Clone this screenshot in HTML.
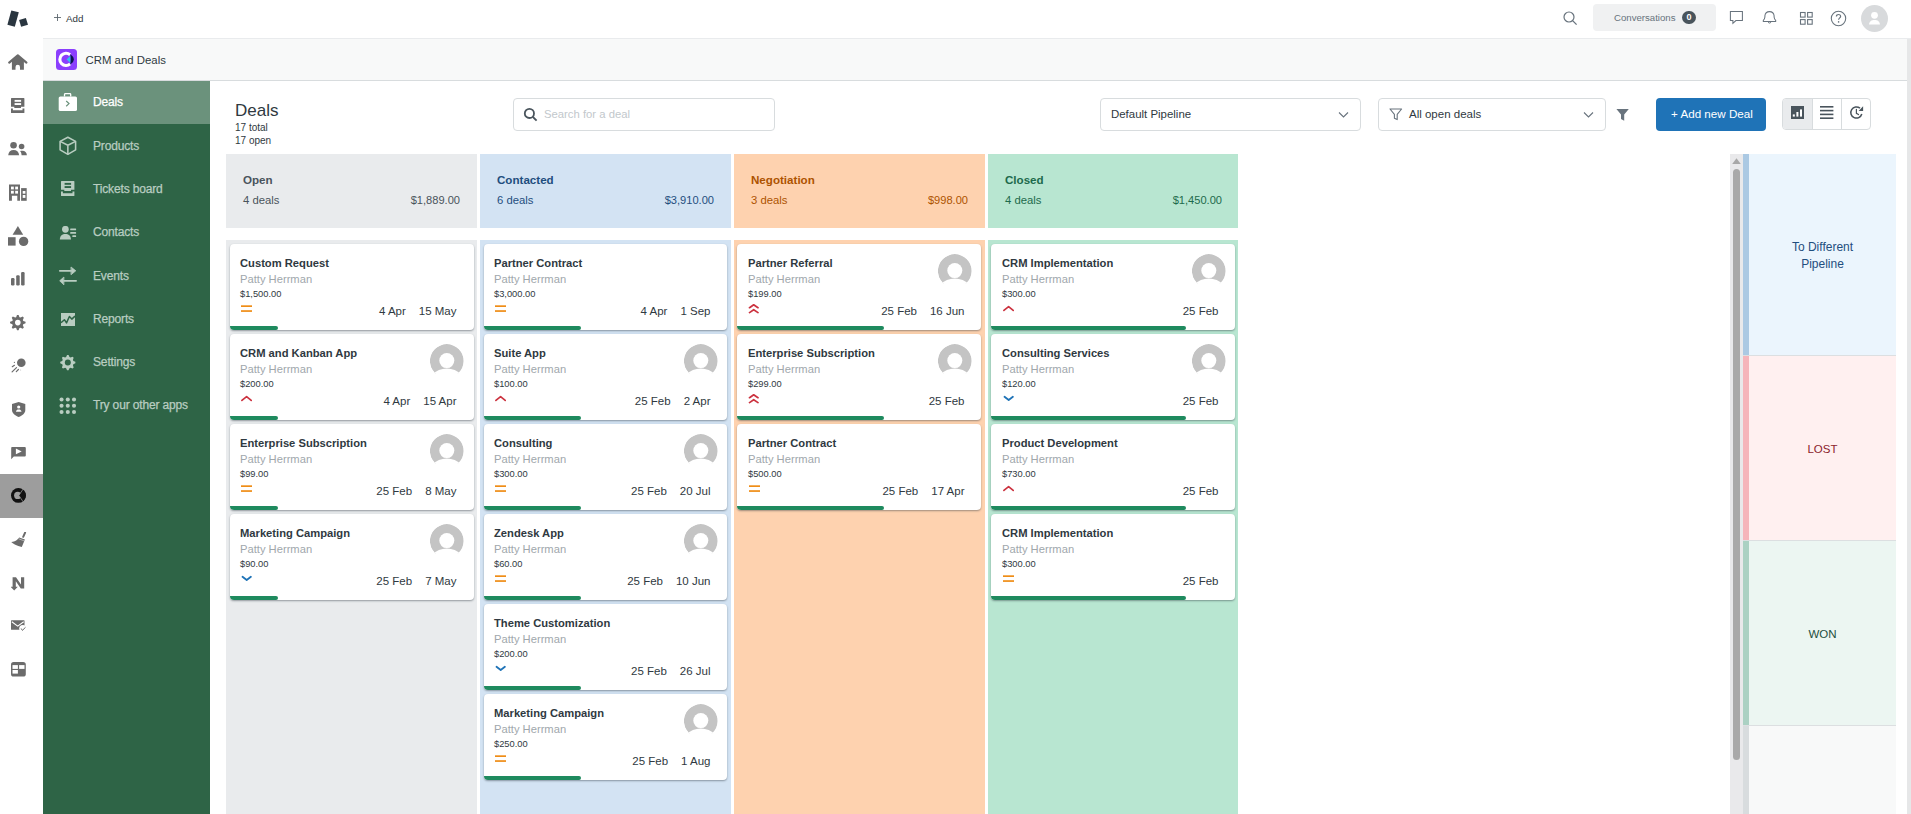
<!DOCTYPE html>
<html><head><meta charset="utf-8"><title>CRM and Deals</title>
<style>
*{box-sizing:border-box;margin:0;padding:0}
html,body{width:1911px;height:814px;overflow:hidden;background:#fff;font-family:"Liberation Sans", sans-serif;color:#2f3941}
.a{position:absolute}
svg.a{display:block}
.t{position:absolute;white-space:nowrap;line-height:1}
.card{position:absolute;width:244px;height:86px;background:#fff;border-radius:4px;box-shadow:0 1px 2px rgba(40,50,60,.45);overflow:hidden}
.card svg{display:block}
.card .ti{position:absolute;left:10px;top:14px;font-size:11.2px;font-weight:700;color:#2f3941;white-space:nowrap;line-height:1}
.card .nm{position:absolute;left:10px;top:30px;font-size:11.2px;color:#a0a7ac;white-space:nowrap;line-height:1}
.card .pr{position:absolute;left:10px;top:45.5px;font-size:9.3px;color:#2f3941;white-space:nowrap;line-height:1}
.card .pi{position:absolute;left:10px;top:61px;line-height:0}
.card .dt{position:absolute;right:17px;top:62px;font-size:11.5px;color:#2f3941;white-space:nowrap;line-height:1}
.card .dt span{margin-left:13px}
.card .av{position:absolute;left:200px;top:10px;width:34px;height:34px}
.card .bar{position:absolute;left:0;top:82px;height:4px;background:#1e8a5e;border-radius:0 3px 3px 3px}
</style></head><body>

<svg class="a" style="left:0;top:0" width="40" height="38" viewBox="0 0 40 38"><polygon points="11.3,10.4 18.8,12.3 14.8,26.7 7.4,24.7" fill="#2a3640"/><polygon points="19.1,19.9 25.9,18 28,24.7 21.1,26.8" fill="#2a3640"/></svg>
<div class="a" style="left:0;top:474px;width:43px;height:44px;background:#9d9d9d"></div>
<svg class="a" style="left:5px;top:50px" width="26" height="26" viewBox="0 0 26 26"><path d="M4.2 12.6 L12.8 5.4 L21.4 12.6" fill="none" stroke="#6b6b6b" stroke-width="2.2" stroke-linecap="round" stroke-linejoin="round"/><path d="M6.9 10.4 L12.8 5.6 L18.9 10.4 V19.8 H15 V16.9 A2.25 2.25 0 0 0 10.5 16.9 V19.8 H6.9 Z" fill="#6b6b6b"/></svg>
<svg class="a" style="left:11px;top:98px" width="14" height="16" viewBox="0 0 14 16"><path d="M0 0.6 Q0 0 0.6 0 H12.8 Q13.4 0 13.4 0.6 V8.7 H10 V9.9 H3.3 V8.7 H0 Z" fill="#6b6b6b"/><rect x="3.6" y="1.9" width="6.5" height="1.9" fill="#fff"/><rect x="3.6" y="5.1" width="6.5" height="1.9" fill="#fff"/><path d="M0 10.5 H1.9 V12.3 H11.5 V10.5 H13.4 V14.5 Q13.4 15.1 12.8 15.1 H0.6 Q0 15.1 0 14.5 Z" fill="#6b6b6b"/></svg>
<svg class="a" style="left:8px;top:142px" width="20" height="14" viewBox="0 0 20 14"><circle cx="5.55" cy="3.3" r="3.3" fill="#6b6b6b"/><path d="M0.2 13.2 C0.5 9.6 2.6 7.9 5.6 7.9 C8.6 7.9 10.8 9.6 11.1 13.2 Z" fill="#6b6b6b"/><circle cx="13.6" cy="4.5" r="2.8" fill="#6b6b6b"/><path d="M12 9 C12.8 8.8 13.6 8.8 14.4 8.8 C17 8.8 18.7 10.4 18.9 13.2 H13.6 C13.5 11.5 13 10 12 9 Z" fill="#6b6b6b"/></svg>
<svg class="a" style="left:9px;top:184px" width="18" height="17" viewBox="0 0 18 17"><path d="M0 0.6 H11 V16.8 H8.3 V11.7 H2.9 V16.8 H0 Z" fill="#6b6b6b"/><rect x="2" y="2.6" width="2.8" height="2.8" fill="#fff"/><rect x="6.2" y="2.6" width="2.8" height="2.8" fill="#fff"/><rect x="2" y="6.8" width="2.8" height="2.8" fill="#fff"/><rect x="6.2" y="6.8" width="2.8" height="2.8" fill="#fff"/><path d="M12.1 4.1 H17.7 V16.8 H12.1 Z" fill="#6b6b6b"/><rect x="13.7" y="7" width="2.7" height="2.7" fill="#fff"/><rect x="13.7" y="11" width="2.7" height="2.9" fill="#fff"/></svg>
<svg class="a" style="left:8px;top:226px" width="21" height="21" viewBox="0 0 21 21"><path d="M9.9 0 L15.2 8.8 H4.6 Z" fill="#6b6b6b"/><rect x="0" y="11.2" width="7.6" height="8.4" fill="#6b6b6b"/><circle cx="15.6" cy="15.4" r="4.7" fill="#6b6b6b"/></svg>
<svg class="a" style="left:11px;top:272px" width="14" height="14" viewBox="0 0 14 14"><rect x="0" y="6" width="3.5" height="7.4" rx="1.2" fill="#6b6b6b"/><rect x="5.2" y="3.3" width="3.5" height="10.1" rx="1.2" fill="#6b6b6b"/><rect x="10.1" y="0" width="3.5" height="13.4" rx="1.2" fill="#6b6b6b"/></svg>
<svg class="a" style="left:10px;top:315px" width="16" height="16" viewBox="0 0 16 16"><path d="M7.04 -0.16 L8.56 -0.16 L9.45 2.15 L10.49 2.57 L12.75 1.57 L13.83 2.65 L12.83 4.91 L13.25 5.95 L15.56 6.84 L15.56 8.36 L13.25 9.25 L12.83 10.29 L13.83 12.55 L12.75 13.63 L10.49 12.63 L9.45 13.05 L8.56 15.36 L7.04 15.36 L6.15 13.05 L5.11 12.63 L2.85 13.63 L1.77 12.55 L2.77 10.29 L2.35 9.25 L0.04 8.36 L0.04 6.84 L2.35 5.95 L2.77 4.91 L1.77 2.65 L2.85 1.57 L5.11 2.57 L6.15 2.15 Z" fill="#6b6b6b"/><circle cx="7.8" cy="7.6" r="2.8" fill="#fff"/></svg>
<svg class="a" style="left:11px;top:358px" width="16" height="16" viewBox="0 0 16 16"><circle cx="10.3" cy="4.7" r="4.3" fill="#6b6b6b"/><circle cx="3.4" cy="4.3" r="0.65" fill="#6b6b6b"/><path d="M1.3 8.7 L3.4 7.3 M1.1 13.9 L5.5 9.6 M5.3 13.6 L7.4 11.5" stroke="#6b6b6b" stroke-width="1.2" stroke-linecap="round"/><circle cx="9.6" cy="12" r="0.5" fill="#bbb"/></svg>
<svg class="a" style="left:12px;top:402px" width="14" height="15" viewBox="0 0 14 15"><path d="M6.7 0 L13.3 2 V8 C13.3 11.4 10.3 13.6 6.7 15 C3.1 13.6 0 11.4 0 8 V2 Z" fill="#6b6b6b"/><circle cx="6.7" cy="5.0" r="1.6" fill="#fff"/><path d="M3.9 9.7 C4.2 8 5.3 7.4 6.7 7.4 C8.1 7.4 9.2 8 9.5 9.7 Z" fill="#fff"/></svg>
<svg class="a" style="left:11px;top:446.5px" width="16" height="13" viewBox="0 0 16 13"><path d="M1 0 H13.8 Q14.8 0 14.8 1 V8.6 Q14.8 9.6 13.8 9.6 H2.8 L0.2 12.2 V1 Q0.2 0 1 0 Z" fill="#6b6b6b"/><path d="M4.9 1.5 L10.7 4.4 L4.9 7.2 Z" fill="#fff"/></svg>
<svg class="a" style="left:11px;top:488px" width="16" height="16" viewBox="0 0 16 16"><circle cx="7.4" cy="7.4" r="7.4" fill="#111"/><circle cx="6.7" cy="7.4" r="3.6" fill="#9d9d9d"/><path d="M7.9 7.4 L11.8 1.4 A7.4 7.4 0 0 1 11.8 13.4 Z" fill="#111"/><path d="M7.9 7.4 L12 1.2 M7.9 7.4 L12 13.6" stroke="#9d9d9d" stroke-width="0.7"/></svg>
<svg class="a" style="left:11px;top:532px" width="16" height="16" viewBox="0 0 16 16"><path d="M14.1 0.6 L12.2 4.8" stroke="#6b6b6b" stroke-width="2" stroke-linecap="round"/><path d="M8.2 5.4 L13.9 7.6 L10.8 14.9 C8.6 14.6 6 13.8 3.8 12.6 C2.4 11.9 1.1 11.1 0.2 10.1 C2.6 9.6 4.9 9 6.4 7.4 Z" fill="#6b6b6b"/><path d="M7.4 6.7 L13.5 9" stroke="#fff" stroke-width="0.6" opacity="0.8"/></svg>
<svg class="a" style="left:11px;top:577px" width="14" height="14" viewBox="0 0 14 14"><path d="M1.6 0.2 H5 L10 7.6 V0.2 H13.2 V11.6 H9.8 L4.8 4.2 V9.8 L6.8 9.8 L3.2 13.6 L-0.4 9.8 L1.6 9.8 Z" fill="#6b6b6b"/></svg>
<svg class="a" style="left:11px;top:620px" width="16" height="13" viewBox="0 0 16 13"><rect x="0" y="0.2" width="13.5" height="9.6" rx="0.6" fill="#6b6b6b"/><circle cx="11.8" cy="8.6" r="3.6" fill="#fff"/><path d="M0.8 1.8 L6.7 6.1 L12.7 1.8" fill="none" stroke="#fff" stroke-width="1.1"/><path d="M10.2 8.5 L11.4 10.4 L14.5 7.3" fill="none" stroke="#6b6b6b" stroke-width="1"/></svg>
<svg class="a" style="left:11px;top:662px" width="15" height="15" viewBox="0 0 15 15"><rect x="0" y="0" width="14.8" height="14.6" rx="2.6" fill="#6b6b6b"/><rect x="1.5" y="3.1" width="5.4" height="3.8" fill="#fff"/><rect x="8.1" y="3.1" width="5.4" height="3.8" fill="#fff"/><rect x="1.5" y="8" width="5.4" height="3.6" fill="#fff"/></svg>
<div class="a" style="left:43px;top:38px;width:1868px;height:1px;background:#e9ebed"></div>
<svg class="a" style="left:54px;top:14px" width="8" height="8" viewBox="0 0 8 8"><path d="M3.5 0 V7 M0 3.5 H7" stroke="#5c666e" stroke-width="0.9"/></svg>
<div class="t" style="left:66px;top:14px;font-size:9.8px;color:#2f3941">Add</div>
<svg class="a" style="left:1563px;top:11px" width="15" height="15" viewBox="0 0 15 15"><circle cx="6" cy="6" r="5" fill="none" stroke="#68737d" stroke-width="1.2"/><path d="M9.6 9.6 L13.6 13.6" stroke="#68737d" stroke-width="1.3"/></svg>
<div class="a" style="left:1593px;top:4px;width:123px;height:27px;background:#f0f1f2;border-radius:4px"></div>
<div class="t" style="left:1614px;top:12.5px;font-size:9.65px;color:#68737d">Conversations</div>
<div class="a" style="left:1682px;top:11px;width:14px;height:13px;border-radius:7px;background:#49545c;color:#fff;font-size:9px;font-weight:700;line-height:13px;text-align:center">0</div>
<svg class="a" style="left:1729px;top:10px" width="16" height="15" viewBox="0 0 16 15"><path d="M1.4 1.5 H13.4 V10.5 H6.9 L3.9 13.3 V10.5 H1.4 Z" fill="none" stroke="#68737d" stroke-width="1.05" stroke-linejoin="miter"/></svg>
<svg class="a" style="left:1762px;top:10px" width="16" height="15" viewBox="0 0 16 15"><path d="M1.3 11.5 V10.3 Q2.7 9.2 2.9 7 V5.8 Q3.3 1.6 7.5 1.6 Q11.7 1.6 12.1 5.8 V7 Q12.3 9.2 13.7 10.3 V11.5 Z" fill="none" stroke="#68737d" stroke-width="1.05" stroke-linejoin="round"/><path d="M6.3 11.8 A1.25 1.25 0 0 0 8.8 11.8" fill="none" stroke="#68737d" stroke-width="1"/></svg>
<svg class="a" style="left:1799px;top:11px" width="16" height="16" viewBox="0 0 16 16"><g fill="none" stroke="#68737d" stroke-width="1.1"><rect x="1.5" y="1.5" width="4.6" height="4.6"/><rect x="8.6" y="1.5" width="4.6" height="4.6"/><rect x="1.5" y="8.6" width="4.6" height="4.6"/><rect x="8.6" y="8.6" width="4.6" height="4.6"/></g></svg>
<svg class="a" style="left:1830px;top:10px" width="17" height="17" viewBox="0 0 17 17"><circle cx="8.5" cy="8.5" r="7.2" fill="none" stroke="#68737d" stroke-width="1.1"/><path d="M6.4 6.6 C6.4 5.2 7.3 4.5 8.5 4.5 C9.7 4.5 10.6 5.3 10.6 6.4 C10.6 7.8 8.6 8 8.6 9.8" fill="none" stroke="#68737d" stroke-width="1.2"/><circle cx="8.6" cy="11.9" r="0.8" fill="#68737d"/></svg>
<svg class="a" style="left:1861px;top:5px" width="27" height="27" viewBox="0 0 27 27"><circle cx="13.5" cy="13.5" r="13.5" fill="#d8dadc"/><circle cx="13.5" cy="10.3" r="3.4" fill="#fff"/><path d="M8 19.6 C8.4 16.2 10.4 15 13.5 15 C16.6 15 18.6 16.2 19 19.6 Z" fill="#fff"/></svg>
<div class="a" style="left:43px;top:39px;width:1864px;height:41px;background:#f8f9f9"></div>
<div class="a" style="left:43px;top:80px;width:1864px;height:1px;background:#d8dcde"></div>
<div class="a" style="left:1907px;top:39px;width:4px;height:775px;background:#e6e7e8"></div>
<svg class="a" style="left:56px;top:49px" width="21" height="21" viewBox="0 0 21 21"><rect width="21" height="21" rx="3.5" fill="#8b3ffd"/><path d="M14.12 5.83 A6.15 6.15 0 1 0 14.12 14.97" fill="none" stroke="#fff" stroke-width="3.1"/><path d="M14.6 6.6 Q12.4 8.9 10.6 10.4 Q12.4 11.9 14.6 14.2 Z" fill="#30c2f0"/><path d="M14.2 4.9 Q21.6 10.4 14.2 15.8 Q15.2 10.4 14.2 4.9 Z" fill="#0b1550"/></svg>
<div class="t" style="left:85.5px;top:55.2px;font-size:11.4px;color:#2f3941">CRM and Deals</div>
<div class="a" style="left:43px;top:81px;width:167px;height:733px;background:#2e6446"></div>
<div class="a" style="left:43px;top:81px;width:167px;height:43px;background:#6b927c"></div>
<div class="t" style="left:93px;top:95.5px;font-size:12px;color:#fff;letter-spacing:-0.15px;-webkit-text-stroke:0.25px #fff">Deals</div>
<div class="t" style="left:93px;top:139.5px;font-size:12px;color:#b9cdc1;letter-spacing:-0.15px;-webkit-text-stroke:0.25px #b9cdc1">Products</div>
<div class="t" style="left:93px;top:182.5px;font-size:12px;color:#b9cdc1;letter-spacing:-0.15px;-webkit-text-stroke:0.25px #b9cdc1">Tickets board</div>
<div class="t" style="left:93px;top:225.5px;font-size:12px;color:#b9cdc1;letter-spacing:-0.15px;-webkit-text-stroke:0.25px #b9cdc1">Contacts</div>
<div class="t" style="left:93px;top:269.5px;font-size:12px;color:#b9cdc1;letter-spacing:-0.15px;-webkit-text-stroke:0.25px #b9cdc1">Events</div>
<div class="t" style="left:93px;top:312.5px;font-size:12px;color:#b9cdc1;letter-spacing:-0.15px;-webkit-text-stroke:0.25px #b9cdc1">Reports</div>
<div class="t" style="left:93px;top:355.5px;font-size:12px;color:#b9cdc1;letter-spacing:-0.15px;-webkit-text-stroke:0.25px #b9cdc1">Settings</div>
<div class="t" style="left:93px;top:399.0px;font-size:12px;color:#b9cdc1;letter-spacing:-0.15px;-webkit-text-stroke:0.25px #b9cdc1">Try our other apps</div>
<svg class="a" style="left:58px;top:93px" width="20" height="19" viewBox="0 0 20 19"><path d="M6.5 3.4 V1.6 Q6.5 0.6 7.5 0.6 H11.7 Q12.7 0.6 12.7 1.6 V3.4" fill="none" stroke="#fff" stroke-width="1.3"/><rect x="0.7" y="3.4" width="18.3" height="14.6" rx="1.6" fill="#fff"/><path d="M8.2 8 L11 10.6 L8.2 13.2" fill="none" stroke="#6b927c" stroke-width="1.2"/></svg>
<svg class="a" style="left:58px;top:136px" width="19" height="20" viewBox="0 0 19 20"><g fill="none" stroke="#b9cdc1" stroke-width="1.55" stroke-linejoin="round"><path d="M9.85 1.3 L17.6 5.4 V13.8 L9.85 18.3 L2.1 13.8 V5.4 Z"/><path d="M2.1 5.4 L9.85 9.3 L17.6 5.4 M9.85 9.3 V18.3"/></g></svg>
<svg class="a" style="left:61px;top:181px" width="14" height="16" viewBox="0 0 14 16"><path d="M0 0.6 Q0 0 0.6 0 H12.8 Q13.4 0 13.4 0.6 V8.7 H10 V9.9 H3.3 V8.7 H0 Z" fill="#b9cdc1"/><rect x="3.6" y="1.9" width="6.5" height="1.9" fill="#2e6446"/><rect x="3.6" y="5.1" width="6.5" height="1.9" fill="#2e6446"/><path d="M0 10.5 H1.9 V12.3 H11.5 V10.5 H13.4 V14.5 Q13.4 15.1 12.8 15.1 H0.6 Q0 15.1 0 14.5 Z" fill="#b9cdc1"/></svg>
<svg class="a" style="left:59px;top:226px" width="18" height="14" viewBox="0 0 18 14"><circle cx="6.4" cy="3.3" r="3.35" fill="#b9cdc1"/><path d="M0.8 13.5 C1 9.6 3.3 8 6.4 8 C9.5 8 11.8 9.6 12 13.5 Z" fill="#b9cdc1"/><rect x="11.2" y="2.6" width="5.9" height="1.6" rx="0.5" fill="#b9cdc1"/><rect x="11.2" y="6.1" width="5.9" height="1.6" rx="0.5" fill="#b9cdc1"/><rect x="13.3" y="9.3" width="3.8" height="1.6" rx="0.5" fill="#b9cdc1"/></svg>
<svg class="a" style="left:58px;top:265px" width="20" height="21" viewBox="0 0 20 21"><g fill="#b9cdc1" stroke="#b9cdc1" stroke-linejoin="round" stroke-linecap="round"><path d="M1.8 5.8 H13.5" stroke-width="1.7" fill="none"/><path d="M13.3 2.2 L17.8 5.8 L13.3 9.5 Z" stroke-width="0.8"/><path d="M6 15.8 H18.1" stroke-width="1.7" fill="none"/><path d="M5.6 12.3 L1.7 15.8 L5.6 19.6 Z" stroke-width="0.8"/></g></svg>
<svg class="a" style="left:61px;top:313px" width="14" height="13" viewBox="0 0 14 13"><path d="M0 0 H14 V13 H0 Z" fill="#b9cdc1"/><path d="M0 9.8 L3.4 6.7 L5.5 9.9 L8.4 3.5 L10.8 6.1 L14 3.1" fill="none" stroke="#2e6446" stroke-width="1.5" stroke-linejoin="round"/></svg>
<svg class="a" style="left:60px;top:355.3px" width="16" height="16" viewBox="0 0 16 16"><path d="M7.06 0.04 L8.54 0.04 L9.48 2.05 L10.53 2.48 L12.62 1.73 L13.67 2.78 L12.92 4.87 L13.35 5.92 L15.36 6.86 L15.36 8.34 L13.35 9.28 L12.92 10.33 L13.67 12.42 L12.62 13.47 L10.53 12.72 L9.48 13.15 L8.54 15.16 L7.06 15.16 L6.12 13.15 L5.07 12.72 L2.98 13.47 L1.93 12.42 L2.68 10.33 L2.25 9.28 L0.24 8.34 L0.24 6.86 L2.25 5.92 L2.68 4.87 L1.93 2.78 L2.98 1.73 L5.07 2.48 L6.12 2.05 Z" fill="#b9cdc1"/><circle cx="7.8" cy="7.6" r="3" fill="#2e6446"/></svg>
<svg class="a" style="left:59px;top:397px" width="18" height="18" viewBox="0 0 18 18"><circle cx="2.55" cy="2.50" r="2.05" fill="#b9cdc1"/><circle cx="8.78" cy="2.50" r="2.05" fill="#b9cdc1"/><circle cx="15.01" cy="2.50" r="2.05" fill="#b9cdc1"/><circle cx="2.55" cy="8.73" r="2.05" fill="#b9cdc1"/><circle cx="8.78" cy="8.73" r="2.05" fill="#b9cdc1"/><circle cx="15.01" cy="8.73" r="2.05" fill="#b9cdc1"/><circle cx="2.55" cy="14.96" r="2.05" fill="#b9cdc1"/><circle cx="8.78" cy="14.96" r="2.05" fill="#b9cdc1"/><circle cx="15.01" cy="14.96" r="2.05" fill="#b9cdc1"/></svg>
<div class="t" style="left:235px;top:102.2px;font-size:17px;color:#2f3941">Deals</div>
<div class="t" style="left:235px;top:123px;font-size:10px;color:#2f3941">17 total</div>
<div class="t" style="left:235px;top:135.5px;font-size:10px;color:#2f3941">17 open</div>
<div class="a" style="left:513px;top:98px;width:262px;height:33px;border:1px solid #d8dcde;border-radius:4px"></div>
<svg class="a" style="left:523px;top:107px" width="16" height="16" viewBox="0 0 16 16"><circle cx="6.4" cy="6.4" r="4.6" fill="none" stroke="#49545c" stroke-width="1.8"/><path d="M9.8 9.8 L13.6 13.6" stroke="#49545c" stroke-width="1.9"/></svg>
<div class="t" style="left:544px;top:109.3px;font-size:11.3px;color:#c2c8cc">Search for a deal</div>
<div class="a" style="left:1100px;top:98px;width:261px;height:33px;border:1px solid #d8dcde;border-radius:4px"></div>
<div class="t" style="left:1111px;top:109px;font-size:11.45px;color:#2f3941">Default Pipeline</div>
<svg class="a" style="left:1338px;top:111px" width="11" height="8" viewBox="0 0 11 8"><path d="M1 1.5 L5.5 6 L10 1.5" fill="none" stroke="#68737d" stroke-width="1.1"/></svg>
<div class="a" style="left:1378px;top:98px;width:228px;height:33px;border:1px solid #d8dcde;border-radius:4px"></div>
<svg class="a" style="left:1389px;top:108px" width="14" height="13" viewBox="0 0 14 13"><path d="M1 1 H12.6 L8.2 6.4 V11.6 L5.4 10.2 V6.4 Z" fill="none" stroke="#68737d" stroke-width="1.1" stroke-linejoin="round"/></svg>
<div class="t" style="left:1409px;top:109px;font-size:11.5px;color:#2f3941">All open deals</div>
<svg class="a" style="left:1583px;top:111px" width="11" height="8" viewBox="0 0 11 8"><path d="M1 1.5 L5.5 6 L10 1.5" fill="none" stroke="#68737d" stroke-width="1.1"/></svg>
<svg class="a" style="left:1616px;top:108px" width="14" height="14" viewBox="0 0 14 14"><path d="M0.4 1 H12.8 L8.2 6.6 V12.8 L5 11 V6.6 Z" fill="#68737d"/></svg>
<div class="a" style="left:1656px;top:98px;width:110px;height:33px;background:#1f73b7;border-radius:4px"></div>
<div class="t" style="left:1671px;top:107.5px;font-size:11.65px;color:#fff">+ Add new Deal</div>
<div class="a" style="left:1782px;top:98px;width:89px;height:32px;border:1px solid #d8dcde;border-radius:4px;overflow:hidden"><div style="position:absolute;left:0;top:0;width:29px;height:30px;background:#e9ebed"></div><div style="position:absolute;left:29px;top:0;width:1px;height:30px;background:#d8dcde"></div><div style="position:absolute;left:58px;top:0;width:1px;height:30px;background:#d8dcde"></div></div>
<svg class="a" style="left:1791px;top:106px" width="13" height="13" viewBox="0 0 13 13"><rect width="13" height="13" fill="#49545c"/><rect x="1.8" y="8.4" width="2" height="2.2" fill="#fff"/><rect x="5.4" y="6" width="2" height="4.6" fill="#fff"/><rect x="9" y="3.4" width="2" height="7.2" fill="#fff"/></svg>
<svg class="a" style="left:1820px;top:106px" width="14" height="14" viewBox="0 0 14 14"><g fill="#49545c"><rect x="0" y="0" width="13.4" height="1.6"/><rect x="0" y="3.8" width="13.4" height="1.6"/><rect x="0" y="7.6" width="13.4" height="1.6"/><rect x="0" y="11.4" width="13.4" height="1.6"/></g></svg>
<svg class="a" style="left:1849px;top:105px" width="15" height="15" viewBox="0 0 15 15"><path d="M12.8 9 A5.6 5.6 0 1 1 11 3.2" fill="none" stroke="#49545c" stroke-width="1.5"/><path d="M14.1 1.3 L14.1 5.9 L9.6 5.9 Z" fill="#49545c"/><path d="M7.4 4.3 V8.3 L9.5 9.6" fill="none" stroke="#49545c" stroke-width="1.2" stroke-linecap="round"/></svg>
<div class="a" style="left:226px;top:154px;width:251px;height:74px;background:#e9ebed"></div>
<div class="a" style="left:226px;top:240px;width:251px;height:574px;background:#e9ebed"></div>
<div class="t" style="left:243px;top:174px;font-size:11.6px;font-weight:700;color:#49545c">Open</div>
<div class="t" style="left:243px;top:195px;font-size:11.3px;color:#49545c">4 deals</div>
<div class="t" style="left:243px;top:195px;width:217px;text-align:right;font-size:11.1px;color:#49545c">$1,889.00</div>
<div class="card" style="left:230px;top:244px"><div class="ti" style="left:10px">Custom Request</div><div class="nm" style="left:10px">Patty Herrman</div><div class="pr" style="left:10px">$1,500.00</div><div class="pi" style="left:10px"><svg width="13" height="8" viewBox="0 0 13 8"><rect x="1" y="0.3" width="11" height="1.7" fill="#ef8d17"/><rect x="1" y="5.2" width="11" height="1.7" fill="#ef8d17"/></svg></div><div class="dt" style="right:17.5px">4 Apr<span>15 May</span></div><div class="bar" style="width:48px"></div></div>
<div class="card" style="left:230px;top:334px"><div class="ti" style="left:10px">CRM and Kanban App</div><div class="nm" style="left:10px">Patty Herrman</div><div class="pr" style="left:10px">$200.00</div><div class="pi" style="left:10px"><svg width="13" height="8" viewBox="0 0 13 8"><path d="M1.9 5.4 L6.6 1.6 L11.2 5.4" fill="none" stroke="#cc3340" stroke-width="1.7" stroke-linecap="round" stroke-linejoin="round"/></svg></div><div class="av" style="left:200px"><svg width="34" height="34" viewBox="0 0 34 34"><defs><clipPath id="ac"><circle cx="16.8" cy="17" r="16.9"/></clipPath></defs><g clip-path="url(#ac)"><circle cx="16.8" cy="17" r="16.9" fill="#c4c4c4"/><circle cx="16.8" cy="16.6" r="7.5" fill="#fff"/><circle cx="16.8" cy="45" r="20.6" fill="#fff"/></g><rect x="0" y="30" width="34" height="4" fill="#fff"/></svg></div><div class="dt" style="right:17.5px">4 Apr<span>15 Apr</span></div><div class="bar" style="width:48px"></div></div>
<div class="card" style="left:230px;top:424px"><div class="ti" style="left:10px">Enterprise Subscription</div><div class="nm" style="left:10px">Patty Herrman</div><div class="pr" style="left:10px">$99.00</div><div class="pi" style="left:10px"><svg width="13" height="8" viewBox="0 0 13 8"><rect x="1" y="0.3" width="11" height="1.7" fill="#ef8d17"/><rect x="1" y="5.2" width="11" height="1.7" fill="#ef8d17"/></svg></div><div class="av" style="left:200px"><svg width="34" height="34" viewBox="0 0 34 34"><defs><clipPath id="ac"><circle cx="16.8" cy="17" r="16.9"/></clipPath></defs><g clip-path="url(#ac)"><circle cx="16.8" cy="17" r="16.9" fill="#c4c4c4"/><circle cx="16.8" cy="16.6" r="7.5" fill="#fff"/><circle cx="16.8" cy="45" r="20.6" fill="#fff"/></g><rect x="0" y="30" width="34" height="4" fill="#fff"/></svg></div><div class="dt" style="right:17.5px">25 Feb<span>8 May</span></div><div class="bar" style="width:48px"></div></div>
<div class="card" style="left:230px;top:514px"><div class="ti" style="left:10px">Marketing Campaign</div><div class="nm" style="left:10px">Patty Herrman</div><div class="pr" style="left:10px">$90.00</div><div class="pi" style="left:10px"><svg width="13" height="8" viewBox="0 0 13 8"><path d="M2.5 1.7 L6.7 5 L10.9 1.7" fill="none" stroke="#1f73b7" stroke-width="1.8" stroke-linecap="round" stroke-linejoin="round"/></svg></div><div class="av" style="left:200px"><svg width="34" height="34" viewBox="0 0 34 34"><defs><clipPath id="ac"><circle cx="16.8" cy="17" r="16.9"/></clipPath></defs><g clip-path="url(#ac)"><circle cx="16.8" cy="17" r="16.9" fill="#c4c4c4"/><circle cx="16.8" cy="16.6" r="7.5" fill="#fff"/><circle cx="16.8" cy="45" r="20.6" fill="#fff"/></g><rect x="0" y="30" width="34" height="4" fill="#fff"/></svg></div><div class="dt" style="right:17.5px">25 Feb<span>7 May</span></div><div class="bar" style="width:48px"></div></div>
<div class="a" style="left:480px;top:154px;width:251px;height:74px;background:#d3e3f3"></div>
<div class="a" style="left:480px;top:240px;width:251px;height:574px;background:#d3e3f3"></div>
<div class="t" style="left:497px;top:174px;font-size:11.6px;font-weight:700;color:#1f4e7e">Contacted</div>
<div class="t" style="left:497px;top:195px;font-size:11.3px;color:#1f4e7e">6 deals</div>
<div class="t" style="left:497px;top:195px;width:217px;text-align:right;font-size:11.1px;color:#1f4e7e">$3,910.00</div>
<div class="card" style="left:484px;top:244px;width:243.2px"><div class="ti" style="left:10px">Partner Contract</div><div class="nm" style="left:10px">Patty Herrman</div><div class="pr" style="left:10px">$3,000.00</div><div class="pi" style="left:10px"><svg width="13" height="8" viewBox="0 0 13 8"><rect x="1" y="0.3" width="11" height="1.7" fill="#ef8d17"/><rect x="1" y="5.2" width="11" height="1.7" fill="#ef8d17"/></svg></div><div class="dt" style="right:16.7px">4 Apr<span>1 Sep</span></div><div class="bar" style="width:97px"></div></div>
<div class="card" style="left:484px;top:334px;width:243.2px"><div class="ti" style="left:10px">Suite App</div><div class="nm" style="left:10px">Patty Herrman</div><div class="pr" style="left:10px">$100.00</div><div class="pi" style="left:10px"><svg width="13" height="8" viewBox="0 0 13 8"><path d="M1.9 5.4 L6.6 1.6 L11.2 5.4" fill="none" stroke="#cc3340" stroke-width="1.7" stroke-linecap="round" stroke-linejoin="round"/></svg></div><div class="av" style="left:200px"><svg width="34" height="34" viewBox="0 0 34 34"><defs><clipPath id="ac"><circle cx="16.8" cy="17" r="16.9"/></clipPath></defs><g clip-path="url(#ac)"><circle cx="16.8" cy="17" r="16.9" fill="#c4c4c4"/><circle cx="16.8" cy="16.6" r="7.5" fill="#fff"/><circle cx="16.8" cy="45" r="20.6" fill="#fff"/></g><rect x="0" y="30" width="34" height="4" fill="#fff"/></svg></div><div class="dt" style="right:16.7px">25 Feb<span>2 Apr</span></div><div class="bar" style="width:97px"></div></div>
<div class="card" style="left:484px;top:424px;width:243.2px"><div class="ti" style="left:10px">Consulting</div><div class="nm" style="left:10px">Patty Herrman</div><div class="pr" style="left:10px">$300.00</div><div class="pi" style="left:10px"><svg width="13" height="8" viewBox="0 0 13 8"><rect x="1" y="0.3" width="11" height="1.7" fill="#ef8d17"/><rect x="1" y="5.2" width="11" height="1.7" fill="#ef8d17"/></svg></div><div class="av" style="left:200px"><svg width="34" height="34" viewBox="0 0 34 34"><defs><clipPath id="ac"><circle cx="16.8" cy="17" r="16.9"/></clipPath></defs><g clip-path="url(#ac)"><circle cx="16.8" cy="17" r="16.9" fill="#c4c4c4"/><circle cx="16.8" cy="16.6" r="7.5" fill="#fff"/><circle cx="16.8" cy="45" r="20.6" fill="#fff"/></g><rect x="0" y="30" width="34" height="4" fill="#fff"/></svg></div><div class="dt" style="right:16.7px">25 Feb<span>20 Jul</span></div><div class="bar" style="width:97px"></div></div>
<div class="card" style="left:484px;top:514px;width:243.2px"><div class="ti" style="left:10px">Zendesk App</div><div class="nm" style="left:10px">Patty Herrman</div><div class="pr" style="left:10px">$60.00</div><div class="pi" style="left:10px"><svg width="13" height="8" viewBox="0 0 13 8"><rect x="1" y="0.3" width="11" height="1.7" fill="#ef8d17"/><rect x="1" y="5.2" width="11" height="1.7" fill="#ef8d17"/></svg></div><div class="av" style="left:200px"><svg width="34" height="34" viewBox="0 0 34 34"><defs><clipPath id="ac"><circle cx="16.8" cy="17" r="16.9"/></clipPath></defs><g clip-path="url(#ac)"><circle cx="16.8" cy="17" r="16.9" fill="#c4c4c4"/><circle cx="16.8" cy="16.6" r="7.5" fill="#fff"/><circle cx="16.8" cy="45" r="20.6" fill="#fff"/></g><rect x="0" y="30" width="34" height="4" fill="#fff"/></svg></div><div class="dt" style="right:16.7px">25 Feb<span>10 Jun</span></div><div class="bar" style="width:97px"></div></div>
<div class="card" style="left:484px;top:604px;width:243.2px"><div class="ti" style="left:10px">Theme Customization</div><div class="nm" style="left:10px">Patty Herrman</div><div class="pr" style="left:10px">$200.00</div><div class="pi" style="left:10px"><svg width="13" height="8" viewBox="0 0 13 8"><path d="M2.5 1.7 L6.7 5 L10.9 1.7" fill="none" stroke="#1f73b7" stroke-width="1.8" stroke-linecap="round" stroke-linejoin="round"/></svg></div><div class="dt" style="right:16.7px">25 Feb<span>26 Jul</span></div><div class="bar" style="width:97px"></div></div>
<div class="card" style="left:484px;top:694px;width:243.2px"><div class="ti" style="left:10px">Marketing Campaign</div><div class="nm" style="left:10px">Patty Herrman</div><div class="pr" style="left:10px">$250.00</div><div class="pi" style="left:10px"><svg width="13" height="8" viewBox="0 0 13 8"><rect x="1" y="0.3" width="11" height="1.7" fill="#ef8d17"/><rect x="1" y="5.2" width="11" height="1.7" fill="#ef8d17"/></svg></div><div class="av" style="left:200px"><svg width="34" height="34" viewBox="0 0 34 34"><defs><clipPath id="ac"><circle cx="16.8" cy="17" r="16.9"/></clipPath></defs><g clip-path="url(#ac)"><circle cx="16.8" cy="17" r="16.9" fill="#c4c4c4"/><circle cx="16.8" cy="16.6" r="7.5" fill="#fff"/><circle cx="16.8" cy="45" r="20.6" fill="#fff"/></g><rect x="0" y="30" width="34" height="4" fill="#fff"/></svg></div><div class="dt" style="right:16.7px">25 Feb<span>1 Aug</span></div><div class="bar" style="width:97px"></div></div>
<div class="a" style="left:734px;top:154px;width:251px;height:74px;background:#fed2af"></div>
<div class="a" style="left:734px;top:240px;width:251px;height:574px;background:#fed2af"></div>
<div class="t" style="left:751px;top:174px;font-size:11.6px;font-weight:700;color:#ad5300">Negotiation</div>
<div class="t" style="left:751px;top:195px;font-size:11.3px;color:#ad5300">3 deals</div>
<div class="t" style="left:751px;top:195px;width:217px;text-align:right;font-size:11.1px;color:#ad5300">$998.00</div>
<div class="card" style="left:737px;top:244px"><div class="ti" style="left:11px">Partner Referral</div><div class="nm" style="left:11px">Patty Herrman</div><div class="pr" style="left:11px">$199.00</div><div class="pi" style="left:11px"><svg width="13" height="12" viewBox="0 0 13 12" style="margin-top:-1px"><path d="M1.5 3.7 L5.7 0.8 L10 3.7 M1.5 8.6 L5.7 5.7 L10 8.6" fill="none" stroke="#cc3340" stroke-width="1.7" stroke-linecap="round" stroke-linejoin="round"/></svg></div><div class="av" style="left:201px"><svg width="34" height="34" viewBox="0 0 34 34"><defs><clipPath id="ac"><circle cx="16.8" cy="17" r="16.9"/></clipPath></defs><g clip-path="url(#ac)"><circle cx="16.8" cy="17" r="16.9" fill="#c4c4c4"/><circle cx="16.8" cy="16.6" r="7.5" fill="#fff"/><circle cx="16.8" cy="45" r="20.6" fill="#fff"/></g><rect x="0" y="30" width="34" height="4" fill="#fff"/></svg></div><div class="dt" style="right:16.5px">25 Feb<span>16 Jun</span></div><div class="bar" style="width:147px"></div></div>
<div class="card" style="left:737px;top:334px"><div class="ti" style="left:11px">Enterprise Subscription</div><div class="nm" style="left:11px">Patty Herrman</div><div class="pr" style="left:11px">$299.00</div><div class="pi" style="left:11px"><svg width="13" height="12" viewBox="0 0 13 12" style="margin-top:-1px"><path d="M1.5 3.7 L5.7 0.8 L10 3.7 M1.5 8.6 L5.7 5.7 L10 8.6" fill="none" stroke="#cc3340" stroke-width="1.7" stroke-linecap="round" stroke-linejoin="round"/></svg></div><div class="av" style="left:201px"><svg width="34" height="34" viewBox="0 0 34 34"><defs><clipPath id="ac"><circle cx="16.8" cy="17" r="16.9"/></clipPath></defs><g clip-path="url(#ac)"><circle cx="16.8" cy="17" r="16.9" fill="#c4c4c4"/><circle cx="16.8" cy="16.6" r="7.5" fill="#fff"/><circle cx="16.8" cy="45" r="20.6" fill="#fff"/></g><rect x="0" y="30" width="34" height="4" fill="#fff"/></svg></div><div class="dt" style="right:16.5px">25 Feb</div><div class="bar" style="width:147px"></div></div>
<div class="card" style="left:737px;top:424px"><div class="ti" style="left:11px">Partner Contract</div><div class="nm" style="left:11px">Patty Herrman</div><div class="pr" style="left:11px">$500.00</div><div class="pi" style="left:11px"><svg width="13" height="8" viewBox="0 0 13 8"><rect x="1" y="0.3" width="11" height="1.7" fill="#ef8d17"/><rect x="1" y="5.2" width="11" height="1.7" fill="#ef8d17"/></svg></div><div class="dt" style="right:16.5px">25 Feb<span>17 Apr</span></div><div class="bar" style="width:147px"></div></div>
<div class="a" style="left:988px;top:154px;width:250px;height:74px;background:#b8e6d1"></div>
<div class="a" style="left:988px;top:240px;width:250px;height:574px;background:#b8e6d1"></div>
<div class="t" style="left:1005px;top:174px;font-size:11.6px;font-weight:700;color:#1d6a4c">Closed</div>
<div class="t" style="left:1005px;top:195px;font-size:11.3px;color:#1d6a4c">4 deals</div>
<div class="t" style="left:1005px;top:195px;width:217px;text-align:right;font-size:11.1px;color:#1d6a4c">$1,450.00</div>
<div class="card" style="left:991px;top:244px"><div class="ti" style="left:11px">CRM Implementation</div><div class="nm" style="left:11px">Patty Herrman</div><div class="pr" style="left:11px">$300.00</div><div class="pi" style="left:11px"><svg width="13" height="8" viewBox="0 0 13 8"><path d="M1.9 5.4 L6.6 1.6 L11.2 5.4" fill="none" stroke="#cc3340" stroke-width="1.7" stroke-linecap="round" stroke-linejoin="round"/></svg></div><div class="av" style="left:201px"><svg width="34" height="34" viewBox="0 0 34 34"><defs><clipPath id="ac"><circle cx="16.8" cy="17" r="16.9"/></clipPath></defs><g clip-path="url(#ac)"><circle cx="16.8" cy="17" r="16.9" fill="#c4c4c4"/><circle cx="16.8" cy="16.6" r="7.5" fill="#fff"/><circle cx="16.8" cy="45" r="20.6" fill="#fff"/></g><rect x="0" y="30" width="34" height="4" fill="#fff"/></svg></div><div class="dt" style="right:16.5px">25 Feb</div><div class="bar" style="width:195px"></div></div>
<div class="card" style="left:991px;top:334px"><div class="ti" style="left:11px">Consulting Services</div><div class="nm" style="left:11px">Patty Herrman</div><div class="pr" style="left:11px">$120.00</div><div class="pi" style="left:11px"><svg width="13" height="8" viewBox="0 0 13 8"><path d="M2.5 1.7 L6.7 5 L10.9 1.7" fill="none" stroke="#1f73b7" stroke-width="1.8" stroke-linecap="round" stroke-linejoin="round"/></svg></div><div class="av" style="left:201px"><svg width="34" height="34" viewBox="0 0 34 34"><defs><clipPath id="ac"><circle cx="16.8" cy="17" r="16.9"/></clipPath></defs><g clip-path="url(#ac)"><circle cx="16.8" cy="17" r="16.9" fill="#c4c4c4"/><circle cx="16.8" cy="16.6" r="7.5" fill="#fff"/><circle cx="16.8" cy="45" r="20.6" fill="#fff"/></g><rect x="0" y="30" width="34" height="4" fill="#fff"/></svg></div><div class="dt" style="right:16.5px">25 Feb</div><div class="bar" style="width:195px"></div></div>
<div class="card" style="left:991px;top:424px"><div class="ti" style="left:11px">Product Development</div><div class="nm" style="left:11px">Patty Herrman</div><div class="pr" style="left:11px">$730.00</div><div class="pi" style="left:11px"><svg width="13" height="8" viewBox="0 0 13 8"><path d="M1.9 5.4 L6.6 1.6 L11.2 5.4" fill="none" stroke="#cc3340" stroke-width="1.7" stroke-linecap="round" stroke-linejoin="round"/></svg></div><div class="dt" style="right:16.5px">25 Feb</div><div class="bar" style="width:195px"></div></div>
<div class="card" style="left:991px;top:514px"><div class="ti" style="left:11px">CRM Implementation</div><div class="nm" style="left:11px">Patty Herrman</div><div class="pr" style="left:11px">$300.00</div><div class="pi" style="left:11px"><svg width="13" height="8" viewBox="0 0 13 8"><rect x="1" y="0.3" width="11" height="1.7" fill="#ef8d17"/><rect x="1" y="5.2" width="11" height="1.7" fill="#ef8d17"/></svg></div><div class="dt" style="right:16.5px">25 Feb</div><div class="bar" style="width:195px"></div></div>
<div class="a" style="left:1730px;top:154px;width:13px;height:660px;background:#e9e9eb"></div>
<svg class="a" style="left:1731px;top:157px" width="11" height="8" viewBox="0 0 11 8"><path d="M1.2 7 L5.5 1.2 L9.8 7 Z" fill="#a8a8a8"/></svg>
<div class="a" style="left:1733px;top:169px;width:7px;height:591px;background:#a9a9a9;border-radius:4px"></div>
<div class="a" style="left:1743px;top:154px;width:6px;height:201px;background:#abc9e3"></div>
<div class="a" style="left:1749px;top:154px;width:147px;height:201px;background:#ebf5fd"></div>
<div class="a" style="left:1749px;top:155px;width:147px;height:201px;display:flex;align-items:center;justify-content:center;text-align:center;font-size:12px;line-height:17px;color:#1f4e7e">To Different<br>Pipeline</div>
<div class="a" style="left:1743px;top:356px;width:6px;height:184px;background:#f5b5bb"></div>
<div class="a" style="left:1749px;top:356px;width:147px;height:184px;background:#fff0f0"></div>
<div class="a" style="left:1743px;top:355px;width:153px;height:1px;background:#dcdfe1"></div>
<div class="a" style="left:1749px;top:357px;width:147px;height:184px;display:flex;align-items:center;justify-content:center;text-align:center;font-size:11.5px;line-height:17px;color:#8c232c">LOST</div>
<div class="a" style="left:1743px;top:541px;width:6px;height:184px;background:#abd1c3"></div>
<div class="a" style="left:1749px;top:541px;width:147px;height:184px;background:#ecf6f2"></div>
<div class="a" style="left:1743px;top:540px;width:153px;height:1px;background:#dcdfe1"></div>
<div class="a" style="left:1749px;top:542px;width:147px;height:184px;display:flex;align-items:center;justify-content:center;text-align:center;font-size:11.5px;line-height:17px;color:#1d4e40">WON</div>
<div class="a" style="left:1743px;top:726px;width:6px;height:100px;background:#d8dcde"></div>
<div class="a" style="left:1749px;top:726px;width:147px;height:100px;background:#f8f9f9"></div>
<div class="a" style="left:1743px;top:725px;width:153px;height:1px;background:#dcdfe1"></div>
</body></html>
